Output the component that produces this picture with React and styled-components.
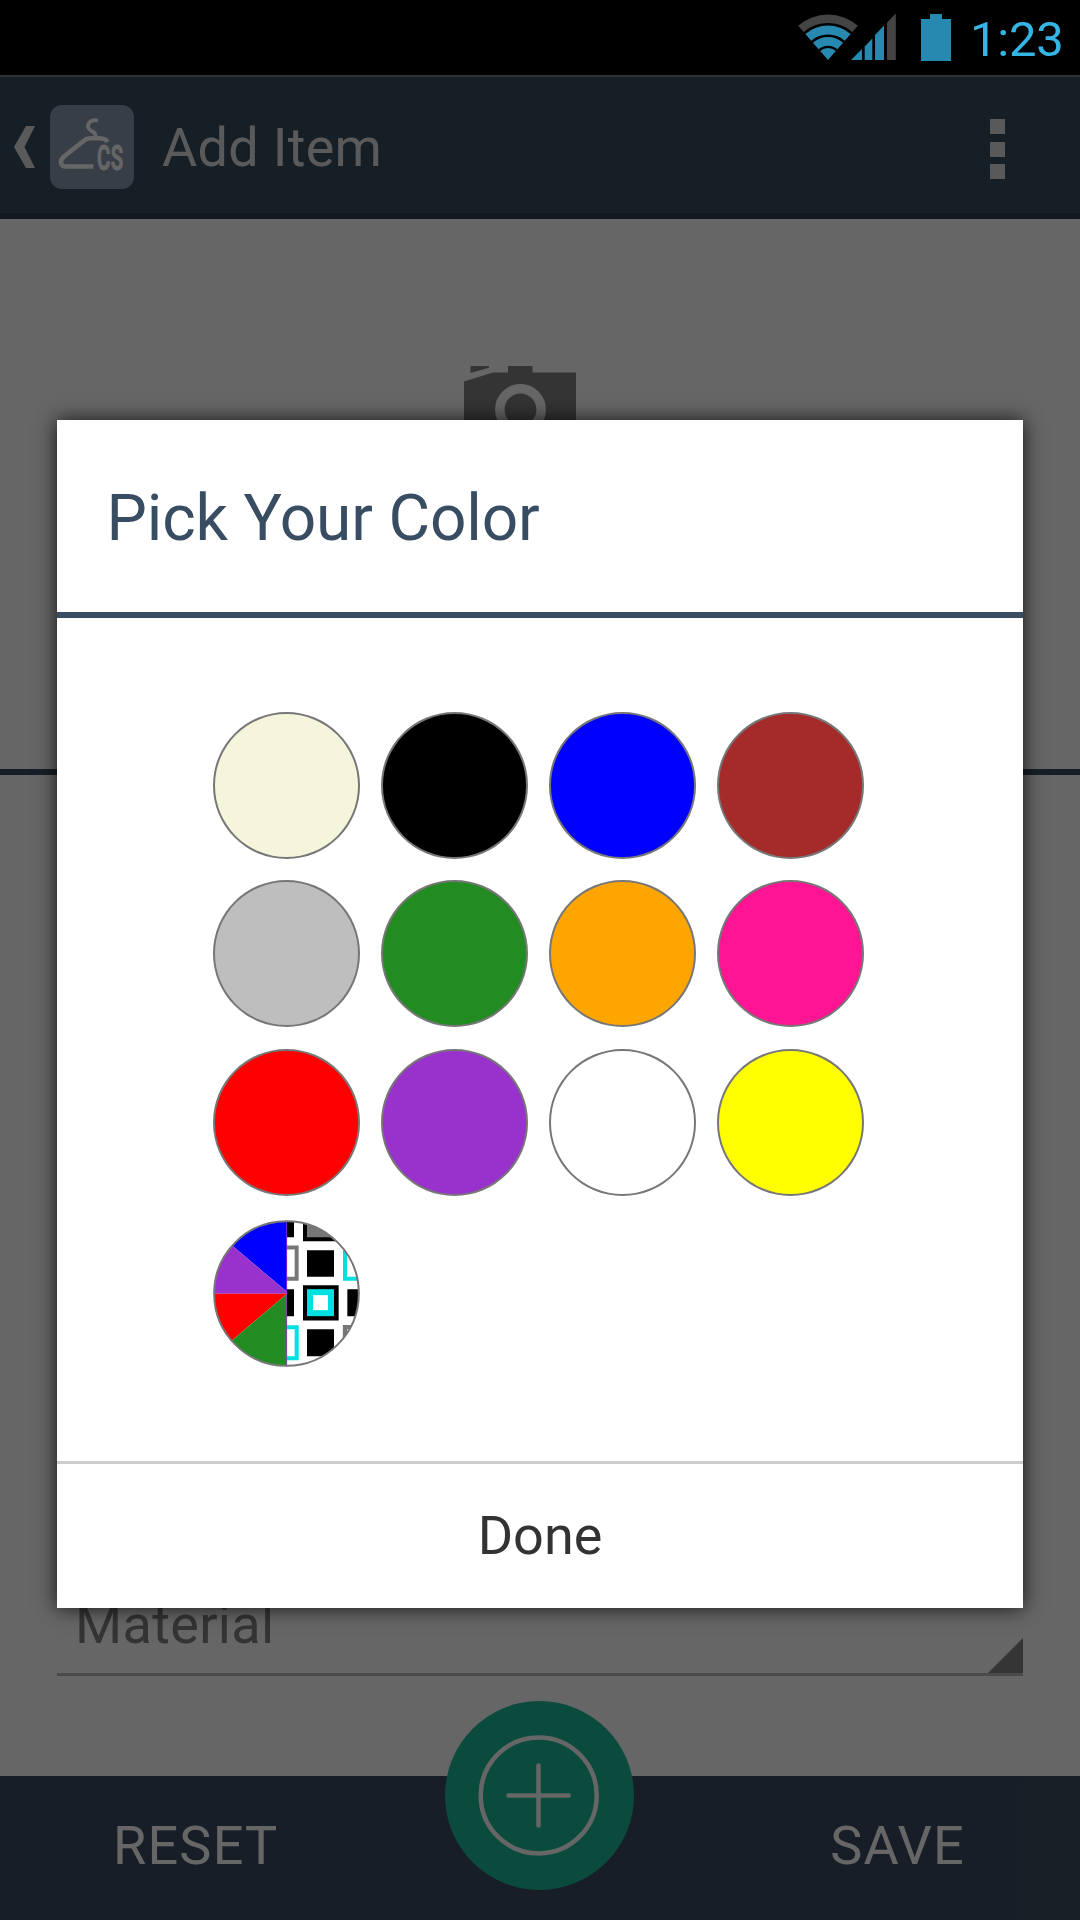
import React from "react";
import styled, { createGlobalStyle } from "styled-components";

const GlobalStyle = createGlobalStyle`
  * { box-sizing: border-box; }
  body { margin: 0; background: #000; font-family: Roboto, "Liberation Sans", sans-serif; }
  svg { display: block; flex: none; }
  button { border: 0; padding: 0; background: none; font: inherit; color: inherit; }
`;

const Screen = styled.div`
  position: relative;
  width: 1080px;
  height: 1920px;
  display: flex;
  flex-direction: column;
  overflow: hidden;
  background: #fff;
`;

const StatusBar = styled.header`
  height: 75px;
  flex: none;
  display: flex;
  justify-content: flex-end;
  padding: 13px 18px 0 0;
  background: #000;
`;

const Clock = styled.span`
  width: 92px;
  margin-left: 18px;
  font-size: 49px;
  line-height: 54px;
  letter-spacing: -0.2px;
  color: #33b5e5;
  white-space: nowrap;
`;

const ActionBar = styled.nav`
  height: 144px;
  flex: none;
  display: flex;
  align-items: center;
  padding: 0 75px 0 14px;
  border-top: 2px solid #787f8e;
  border-bottom: 6px solid #2d3e50;
  background: #374b5f;
`;

const Chevron = styled.svg`
  margin-top: 4px;
`;

const AppIcon = styled.div`
  width: 84px;
  height: 84px;
  margin: 4px 0 0 15px;
  border-radius: 12px;
  background: #899bb1;
`;

const ActionTitle = styled.h1`
  flex: 1;
  margin: 5px 0 0 28px;
  font-size: 54px;
  font-weight: 400;
  line-height: 64px;
  letter-spacing: 0.3px;
  color: #e1e1e1;
`;

const Overflow = styled.button`
  display: grid;
  gap: 7.5px;
  margin-top: 8px;
`;

const OverflowDot = styled.i`
  width: 15px;
  height: 15px;
  background: #dedede;
`;

const PhotoArea = styled.section`
  height: 556px;
  flex: none;
  display: flex;
  padding: 147px 0 0 464px;
  border-bottom: 6px solid #394f62;
`;

const Form = styled.main`
  flex: 1;
  display: flex;
  flex-direction: column;
  justify-content: flex-end;
  padding: 0 57px 100px;
`;

const Spinner = styled.div`
  display: flex;
  justify-content: space-between;
  align-items: flex-end;
  height: 87px;
  border-bottom: 3px solid #b9b9b9;
`;

const SpinnerLabel = styled.span`
  padding: 0 0 16px 18px;
  font-size: 54px;
  line-height: 64px;
  letter-spacing: 0.35px;
  color: #828282;
`;

const Footer = styled.footer`
  height: 144px;
  flex: none;
  display: flex;
  justify-content: space-between;
  padding: 0 115px 0 113px;
  background: #3a4d62;
`;

const FooterButton = styled.button`
  font-size: 54px;
  line-height: 140px;
  height: 140px;
  letter-spacing: 1.2px;
  color: #fff;
`;

const AddButton = styled.button`
  position: absolute;
  left: 445px;
  top: 1701px;
  width: 189px;
  height: 189px;
  border-radius: 50%;
  background: #1abc98;
`;

const Scrim = styled.div`
  position: absolute;
  inset: 75px 0 0;
  padding: 345px 57px 0;
  background: rgba(0, 0, 0, 0.6);
`;

const Dialog = styled.section`
  height: 1188px;
  display: flex;
  flex-direction: column;
  background: #fff;
  box-shadow: 0 0 19px rgba(0, 0, 0, 0.8);
`;

const DialogTitle = styled.h2`
  height: 198px;
  margin: 0;
  padding: 2px 0 0 49.5px;
  border-bottom: 6px solid #394d62;
  font-size: 64px;
  font-weight: 400;
  line-height: 194px;
  letter-spacing: -0.15px;
  color: #394d62;
`;

const Palette = styled.div`
  flex: 1;
  display: grid;
  grid-template-columns: repeat(4, 147px);
  grid-template-rows: 168px 169px 171px 147px;
  column-gap: 21px;
  align-content: start;
  padding: 94px 0 0 156px;
`;

const Swatch = styled.button`
  width: 147px;
  height: 146.5px;
  border: 2px solid #777;
  border-radius: 50%;
  background: ${(p) => p.$color};
`;

const DoneButton = styled.button`
  height: 147px;
  padding-bottom: 1px;
  border-top: 3px solid #ccc;
  font-size: 54px;
  line-height: 141px;
  color: #333;
`;

const COLORS = [
  ["Beige", "#f5f5dc"],
  ["Black", "#000"],
  ["Blue", "#00f"],
  ["Brown", "#a52a2a"],
  ["Gray", "#bebebe"],
  ["Green", "#228b22"],
  ["Orange", "#ffa500"],
  ["Pink", "#ff1493"],
  ["Red", "#f00"],
  ["Purple", "#9932cc"],
  ["White", "#fff"],
  ["Yellow", "#ff0"],
];

const WIFI_BANDS = [
  [45.5, 37, "#444"],
  [34.5, 25.6, "#2789b0"],
  [22.9, 14.3, "#2789b0"],
  [12, 0, "#2789b0"],
];

// One band of the fan; the apex sits at (31, 47).
function bandPath(outer, inner) {
  const s = 0.657;
  const c = 0.754;
  const at = (r, side) => `${31 + side * r * s} ${47 - r * c}`;
  return `M${at(outer, -1)}A${outer} ${outer} 0 0 1 ${at(outer, 1)}L${at(inner, 1)}A${inner} ${inner} 0 0 0 ${at(inner, -1)}Z`;
}

function StatusIcons() {
  return (
    <svg width="155" height="50" viewBox="0 0 155 50">
      {WIFI_BANDS.map(([outer, inner, fill]) => (
        <path key={outer} d={bandPath(outer, inner)} fill={fill} />
      ))}
      <g fill="#2789b0">
        <path d="M54 47L65 36V47Z" />
        <path d="M67.7 47V33.5L75.3 25.5V47Z" />
        <path d="M78 47V22L87 12.5V47Z" />
        <path d="M133 1H145V6H154V48H124V6H133Z" />
      </g>
      <path d="M90 47V9.5L98.8 .5V47Z" fill="#444" />
    </svg>
  );
}

function HangerLogo() {
  return (
    <svg width="84" height="84" viewBox="0 0 84 84" fill="none" stroke="#fff">
      <path
        d="M48 15.500C42 14.500 38 17 38 21.500C38 26.500 45.500 25.500 45.500 30.500V32"
        strokeWidth="3.8"
      />
      <path
        d="M57.500 37C56 33.500 52 33.300 48 33.300H40C37 33.300 35.500 34.300 33.500 36L14 51.500C9 56 10.500 61.500 16 61.500H43.500"
        strokeWidth="4.6"
      />
      <text
        transform="translate(46.900 64.600) scale(.58 1)"
        fill="#fff"
        strokeWidth=".8"
        fontFamily="Roboto, sans-serif"
        fontSize="35"
        fontWeight="600"
        letterSpacing="1"
      >
        CS
      </text>
    </svg>
  );
}

function Camera() {
  return (
    <svg width="112" height="92" viewBox="0 0 112 92" fill="#828282">
      <path d="M6.5 0H25V1.8L6.5 7Z" />
      <path d="M0 15.5L29 6.5H44V0H68.500V6.500H112V92H0Z" />
      <circle cx="56.500" cy="43.500" r="20.700" fill="none" stroke="#fff" strokeWidth="9.500" />
    </svg>
  );
}

function PatternSwatch() {
  return (
    <svg width="147" height="147" viewBox="39 60 441 440">
      <defs>
        <clipPath id="disc">
          <circle cx="259.500" cy="280" r="217" />
        </clipPath>
      </defs>
      <g clipPath="url(#disc)">
        <rect x="39" y="60" width="441" height="440" fill="#fff" />
        <path d="M261 275V60H39V88Z" fill="#00f" />
        <path d="M261 275L39 88V281H261Z" fill="#9932cc" />
        <path d="M261 281H39V469Z" fill="#f00" />
        <path d="M261 281L39 469V500H261Z" fill="#228b22" />
        <path d="M260 60V500" stroke="#9932cc" strokeWidth="2.500" />
        <path d="M261 60H282V111H261ZM309 60H416V123H309ZM321 150H402V230H321ZM261 267H282V348H261ZM309 255H416V361H309ZM442 267H480V348H442ZM321 387H402V468H321Z" fill="#000" />
        <path d="M321 60H402V111H321Z" fill="#777" />
        <path d="M261 142H290V236H261" fill="none" stroke="#777" strokeWidth="12" />
        <path d="M261 381H290V474H261M480 142H435V236H480" fill="none" stroke="#00e0e0" strokeWidth="12" />
        <rect x="330" y="276" width="63" height="63" fill="#fff" stroke="#00e0e0" strokeWidth="18" />
        <path d="M480 381H435V474" fill="none" stroke="#777" strokeWidth="13" />
        <path d="M441 387H450V396H441Z" fill="#ddd" />
      </g>
      <circle cx="259.500" cy="280" r="217" fill="none" stroke="#777" strokeWidth="6" />
    </svg>
  );
}

export default function App() {
  return (
    <>
      <GlobalStyle />
      <Screen>
        <StatusBar>
          <StatusIcons />
          <Clock>1:23</Clock>
        </StatusBar>
        <ActionBar>
          <Chevron width="21" height="42" viewBox="0 0 21 42">
            <path d="M12 0H21L10.500 21L21 42H12L0 21Z" fill="#e1e1e1" />
          </Chevron>
          <AppIcon>
            <HangerLogo />
          </AppIcon>
          <ActionTitle>Add Item</ActionTitle>
          <Overflow aria-label="More options">
            <OverflowDot />
            <OverflowDot />
            <OverflowDot />
          </Overflow>
        </ActionBar>
        <PhotoArea>
          <Camera />
        </PhotoArea>
        <Form>
          <Spinner>
            <SpinnerLabel>Material</SpinnerLabel>
            <svg width="35" height="35" viewBox="0 0 35 35">
              <path d="M35 0V35H0Z" fill="#868686" />
            </svg>
          </Spinner>
        </Form>
        <Footer>
          <FooterButton>RESET</FooterButton>
          <FooterButton>SAVE</FooterButton>
        </Footer>
        <AddButton aria-label="Add">
          <svg width="189" height="189" viewBox="0 0 189 189" fill="none" stroke="#fff" strokeWidth="4.500">
            <circle cx="93.700" cy="94.400" r="58" />
            <path d="M63.500 94.400H123.700M93.500 64.400V124.500" strokeLinecap="round" />
          </svg>
        </AddButton>
        <Scrim>
          <Dialog role="dialog">
            <DialogTitle>Pick Your Color</DialogTitle>
            <Palette>
              {COLORS.map(([name, color]) => (
                <Swatch key={name} $color={color} aria-label={name} />
              ))}
              <PatternSwatch />
            </Palette>
            <DoneButton>Done</DoneButton>
          </Dialog>
        </Scrim>
      </Screen>
    </>
  );
}
